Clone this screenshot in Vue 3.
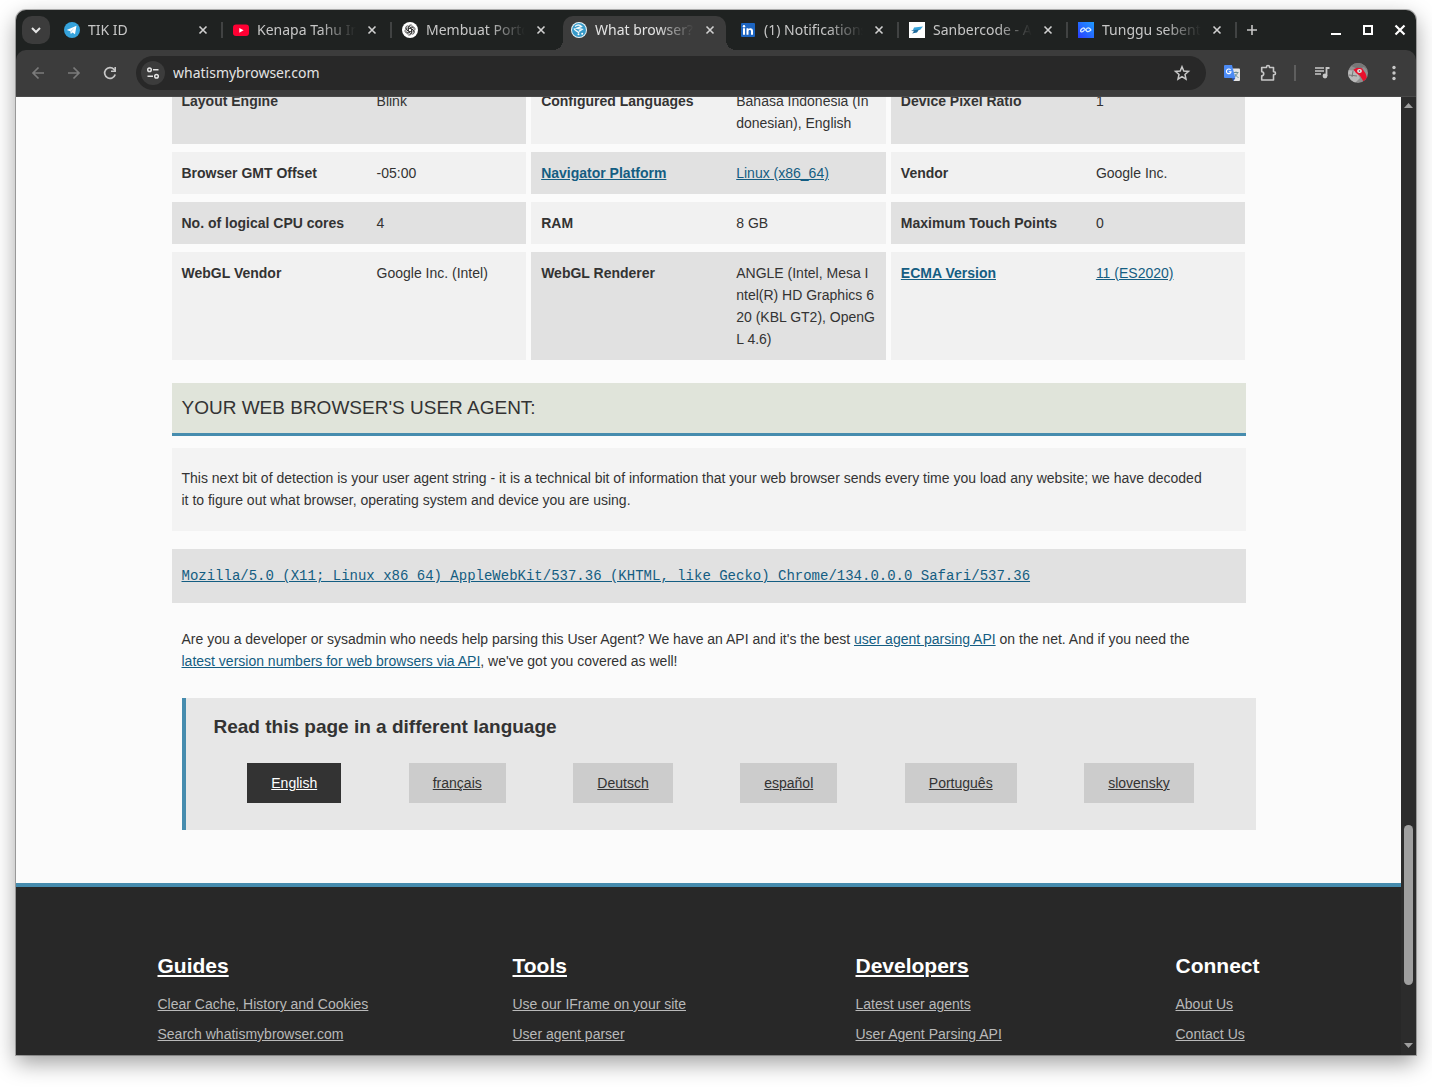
<script setup>
import { ref } from 'vue'

const address = ref('whatismybrowser.com')

const tabs = [
  { icon: 'telegram', title: 'TIK ID', divider: true },
  { icon: 'youtube', title: 'Kenapa Tahu In', divider: true },
  { icon: 'openai', title: 'Membuat Porto' },
  { icon: 'browser', title: 'What browser?', active: true },
  { icon: 'linkedin', title: '(1) Notifications', divider: true },
  { icon: 'sanber', title: 'Sanbercode - A', divider: true },
  { icon: 'wave', title: 'Tunggu sebent', divider: true },
]

const facts = [
  { label: 'Layout Engine', value: 'Blink' },
  { label: 'Configured Languages', value: 'Bahasa Indonesia (Indonesian), English' },
  { label: 'Device Pixel Ratio', value: '1' },
  { label: 'Browser GMT Offset', value: '-05:00' },
  { label: 'Navigator Platform', value: 'Linux (x86_64)', link: true },
  { label: 'Vendor', value: 'Google Inc.' },
  { label: 'No. of logical CPU cores', value: '4' },
  { label: 'RAM', value: '8 GB' },
  { label: 'Maximum Touch Points', value: '0' },
  { label: 'WebGL Vendor', value: 'Google Inc. (Intel)' },
  { label: 'WebGL Renderer', value: 'ANGLE (Intel, Mesa Intel(R) HD Graphics 620 (KBL GT2), OpenGL 4.6)' },
  { label: 'ECMA Version', value: '11 (ES2020)', link: true },
]

const languages = ['English', 'français', 'Deutsch', 'español', 'Português', 'slovensky']

const footer = [
  { title: 'Guides', link: true, items: ['Clear Cache, History and Cookies', 'Search whatismybrowser.com'] },
  { title: 'Tools', link: true, items: ['Use our IFrame on your site', 'User agent parser'] },
  { title: 'Developers', link: true, items: ['Latest user agents', 'User Agent Parsing API'] },
  { title: 'Connect', items: ['About Us', 'Contact Us'] },
]
</script>

<template>
  <div class="desktop">
  <div class="window">
    <header class="chrome">
      <div class="tabstrip">
        <button class="tab-search" aria-label="Search tabs">
          <svg width="10" height="10" viewBox="0 0 10 10"><path d="M1 3 5 7l4-4" fill="none" stroke="#e6e6e6" stroke-width="2" /></svg>
        </button>
        <div class="tabs">
          <div v-for="tab in tabs" :key="tab.title" class="tab" :class="{ active: tab.active, divider: tab.divider }">
            <svg v-if="tab.icon === 'telegram'" class="favicon" viewBox="0 0 16 16">
              <circle cx="8" cy="8" r="8" fill="#35a3dc" />
              <path d="M2.700 8 12.500 3.800 11 12.300 8.400 10.600 6.900 12 6.300 9.300Z" fill="#fff" />
              <path d="m6.300 9.300 4.200-3.600-3.300 4.200-.3 2Z" fill="#b5d9ee" />
            </svg>
            <svg v-else-if="tab.icon === 'youtube'" class="favicon" viewBox="0 0 16 16">
              <rect y="2.500" width="16" height="11.500" rx="3" fill="#f03" />
              <path d="m6.300 5.900 4.300 2.400-4.300 2.400Z" fill="#fff" />
            </svg>
            <svg v-else-if="tab.icon === 'openai'" class="favicon" viewBox="0 0 16 16">
              <circle cx="8" cy="8" r="8" fill="#fff" />
              <g fill="none" stroke="#222" stroke-width=".7">
                <path v-for="n in 6" :key="n" :transform="`rotate(${n * 60} 8 8)`" d="M6.300 9V5.200a2.300 2.300 0 0 1 4.300-1.100M6.300 7l3.300-1.900 2.300 1.300" />
              </g>
            </svg>
            <svg v-else-if="tab.icon === 'browser'" class="favicon" viewBox="0 0 16 16">
              <circle cx="8" cy="8" r="8" fill="#e9f5fa" />
              <circle cx="8" cy="8" r="7" fill="#3699c8" />
              <path d="M4 4.500c2.500-2 5-1.500 6.500 0L6 6.300l5 1-3 2M3 6.500c1 2.500 3.500 2.500 5 4.500" fill="none" stroke="#eef8fc" stroke-width="1.400" />
              <circle cx="11.200" cy="11.700" r="1" fill="#fff" /><circle cx="7.500" cy="12.300" r="1" fill="#fff" />
            </svg>
            <svg v-else-if="tab.icon === 'linkedin'" class="favicon" viewBox="0 0 16 16">
              <rect x="1" y="1" width="14" height="14" rx="1" fill="#1d65c1" />
              <path d="M3 6.300h2v6.500H3ZM6.500 6.300h2v1c.8-1.600 4.500-1.700 4.500 1.500v4h-2V9.300c0-1.800-2.500-1.700-2.500 0v3.500h-2Z" fill="#fff" />
              <circle cx="4" cy="4.200" r="1.200" fill="#fff" />
            </svg>
            <svg v-else-if="tab.icon === 'sanber'" class="favicon" viewBox="0 0 16 16">
              <path d="M0 0h16v16H0Z" fill="#fff" />
              <path d="M5 5.500 14 4.500l-3 3.500H4Z" fill="#39a5dc" />
              <path d="m2 8.500 8-1L8 10.500l-5 1 2-2Z" fill="#1e6c9e" />
            </svg>
            <svg v-else class="favicon" viewBox="0 0 16 16">
              <defs><linearGradient id="wave-fill" x1="0" y1="1" x2="1" y2="0"><stop stop-color="#2a3cff" /><stop offset="1" stop-color="#1e9bff" /></linearGradient></defs>
              <path d="M0 0h16v16H0Z" fill="url(#wave-fill)" />
              <path d="M3 9.800C1.500 8.500 4.500 5.500 6 6l3 3.500c1.500.8 2.500-.5 4.200-1.800M3 9.800c1.500.7 2.500-.6 3.500-1.800M8 7.500c1-1.500 2-2 3-1.500l2.200 1.700" fill="none" stroke="#d9ecff" stroke-width="1.300" />
            </svg>
            <span class="tab-title">{{ tab.title }}</span>
            <button class="tab-close" :aria-label="`Close ${tab.title}`">
              <svg width="10" height="10" viewBox="0 0 10 10"><path d="m1.500 1.500 7 7m0-7-7 7" stroke="currentColor" stroke-width="1.600" /></svg>
            </button>
          </div>
        </div>
        <button class="new-tab" aria-label="New tab">
          <svg width="12" height="12" viewBox="0 0 12 12"><path d="M6 1v10M1 6h10" stroke="#c7c7c7" stroke-width="1.600" /></svg>
        </button>
        <div class="window-controls">
          <button aria-label="Minimize"><svg width="12" height="12" viewBox="0 0 12 12"><path d="M1 10h10" stroke="#fff" stroke-width="2" /></svg></button>
          <button aria-label="Maximize"><svg width="12" height="12" viewBox="0 0 12 12"><path d="M2 2h8v8H2Z" fill="none" stroke="#fff" stroke-width="2" /></svg></button>
          <button aria-label="Close window"><svg width="12" height="12" viewBox="0 0 12 12"><path d="m1.500 1.500 9 9m0-9-9 9" stroke="#fff" stroke-width="2.200" /></svg></button>
        </div>
      </div>

      <div class="toolbar">
        <button class="tool" aria-label="Back"><svg width="16" height="16" viewBox="0 0 16 16"><path d="M14 8H3m5.500-5.500L3 8l5.500 5.500" fill="none" stroke="#7b7b7b" stroke-width="1.700" /></svg></button>
        <button class="tool" aria-label="Forward"><svg width="16" height="16" viewBox="0 0 16 16"><path d="M2 8h11M7.500 2.500 13 8l-5.500 5.500" fill="none" stroke="#7b7b7b" stroke-width="1.700" /></svg></button>
        <button class="tool" aria-label="Reload"><svg width="16" height="16" viewBox="0 0 16 16"><path d="M13.200 9.500A5.400 5.400 0 1 1 12 4.300L13.300 6" fill="none" stroke="#c7c7c7" stroke-width="1.700" /><path d="M14 2v5H9V5.400h3.400V2Z" fill="#c7c7c7" /></svg></button>
        <div class="omnibox">
          <button class="site-info" aria-label="View site information">
            <svg width="16" height="16" viewBox="0 0 16 16" fill="none" stroke="#e3e3e3" stroke-width="1.500"><circle cx="4.500" cy="4.700" r="1.800" /><path d="M8 4.700h5.500M2.500 11.300H8" /><circle cx="11.500" cy="11.300" r="1.800" /></svg>
          </button>
          <input v-model="address" class="address" type="text" aria-label="Address" />
          <button class="star" aria-label="Bookmark this tab">
            <svg width="18" height="18" viewBox="0 0 18 18"><path d="m9 2.700 1.800 4.300 4.700.4L12 10.500l1 4.600-4-2.500-4 2.500 1-4.600-3.500-3.100L7.200 7Z" fill="none" stroke="#c7c7c7" stroke-width="1.500" /></svg>
          </button>
        </div>
        <button class="tool" aria-label="Translate">
          <svg width="16" height="16" viewBox="0 0 16 16">
            <path d="M6 3.500h9a1 1 0 0 1 1 1V15a1 1 0 0 1-1 1H9.500Z" fill="#e4e4e4" />
            <path d="M9.500 7.500h5M12 6.500v1M13.500 7.500c-.5 2.500-2 4-3.500 4.500M11 9c.5 1.500 2 3 3.500 3.500" fill="none" stroke="#5d8790" stroke-width=".9" />
            <path d="M1 0h7l3.300 13H1a1 1 0 0 1-1-1V1a1 1 0 0 1 1-1Z" fill="#4c8bf5" /><path d="M7.500 13h3.800L9.500 16Z" fill="#2856b5" />
            <path d="M6.600 5A2.300 2.300 0 1 0 7 6.800H4.800" fill="none" stroke="#fff" stroke-width="1.100" />
          </svg>
        </button>
        <button class="tool" aria-label="Extensions">
          <svg width="18" height="18" viewBox="0 0 18 18"><path d="M2.700 3.500h4.800V3a1.500 1.500 0 0 1 3 0v.5h4v4.300h.5a1.500 1.500 0 0 1 0 3h-.5V16H2.700v-4.300a2 2 0 0 0 0-4Z" fill="none" stroke="#c7c7c7" stroke-width="1.600" stroke-linejoin="round" /></svg>
        </button>
        <span class="tool-divider"></span>
        <button class="tool" aria-label="Media controls">
          <svg width="18" height="16" viewBox="0 0 18 16"><path d="M2 3h9M2 6h9M2 9h6" stroke="#c7c7c7" stroke-width="1.600" /><path d="M16.500 3h-3v8" fill="none" stroke="#c7c7c7" stroke-width="1.800" /><circle cx="12" cy="11" r="2.400" fill="#c7c7c7" /></svg>
        </button>
        <button class="tool" aria-label="Profile">
          <svg width="20" height="20" viewBox="0 0 20 20">
            <defs><clipPath id="avatar-clip"><circle cx="10" cy="10" r="10" /></clipPath></defs>
            <g clip-path="url(#avatar-clip)">
              <path d="M0 0h20v20H0Z" fill="#8f8f8f" />
              <path d="M0 7 8 8l4 7-5 5H0Z" fill="#b9b9b9" /><path d="m3 3 7 3 6-2 4 4V3l-6-3H5Z" fill="#777" />
              <path d="m1 12 8 1M5 8l-1 6" stroke="#777" fill="none" />
              <path d="M5.500 6.500 9 4.800l5 .4 3.500 5 2 6-3.500 3-4-6.500L8 10Z" fill="#e8102c" />
              <ellipse cx="11.500" cy="8" rx="2.400" ry="2" fill="#e6e6e6" /><circle cx="11.500" cy="8" r=".8" fill="#444" />
            </g>
          </svg>
        </button>
        <button class="tool" aria-label="Menu"><svg width="16" height="16" viewBox="0 0 16 16" fill="#c7c7c7"><circle cx="8" cy="2.500" r="1.700" /><circle cx="8" cy="8" r="1.700" /><circle cx="8" cy="13.500" r="1.700" /></svg></button>
      </div>
    </header>

    <div class="viewport">
      <div class="page">
        <main class="content">
          <dl class="facts">
            <div v-for="fact in facts" :key="fact.label" class="fact">
              <dt><a v-if="fact.link" href="#">{{ fact.label }}</a><template v-else>{{ fact.label }}</template></dt>
              <dd><a v-if="fact.link" href="#">{{ fact.value }}</a><template v-else>{{ fact.value }}</template></dd>
            </div>
          </dl>

          <h2 class="section-title">Your Web Browser's User Agent:</h2>
          <p class="intro">This next bit of detection is your user agent string - it is a technical bit of information that your web browser sends every time you load any website; we have decoded<br />it to figure out what browser, operating system and device you are using.</p>
          <p class="agent"><a href="#">Mozilla/5.0 (X11; Linux x86_64) AppleWebKit/537.36 (KHTML, like Gecko) Chrome/134.0.0.0 Safari/537.36</a></p>
          <p class="developer">Are you a developer or sysadmin who needs help parsing this User Agent? We have an API and it's the best <a href="#">user agent parsing API</a> on the net. And if you need the<br /><a href="#">latest version numbers for web browsers via API</a>, we've got you covered as well!</p>

          <section class="languages">
            <h3>Read this page in a different language</h3>
            <nav class="language-list" aria-label="Languages">
              <a v-for="(language, i) in languages" :key="language" href="#" :class="{ current: i === 0 }">{{ language }}</a>
            </nav>
          </section>
        </main>

        <footer class="footer">
          <div class="footer-columns">
            <section v-for="column in footer" :key="column.title">
              <h4><a v-if="column.link" href="#">{{ column.title }}</a><template v-else>{{ column.title }}</template></h4>
              <ul>
                <li v-for="item in column.items" :key="item"><a href="#">{{ item }}</a></li>
              </ul>
            </section>
          </div>
        </footer>
      </div>

      <div class="scrollbar" aria-hidden="true">
        <svg width="9" height="5" viewBox="0 0 9 5"><path d="M0 5h9L4.500 0Z" fill="#9f9f9f" /></svg>
        <div class="track"><div class="thumb"></div></div>
        <svg width="9" height="5" viewBox="0 0 9 5"><path d="M0 0h9L4.500 5Z" fill="#9f9f9f" /></svg>
      </div>
    </div>
  </div>
  </div>
</template>

<style>
body {
  background: #fff;
}
</style>

<style scoped>
* {
  box-sizing: border-box;
}

.desktop {
  height: 100vh;
  padding: 10px 16px 32px;
  overflow: hidden;
}

.window {
  display: flex;
  flex-direction: column;
  height: 100%;
  border-radius: 10px 10px 0 0;
  overflow: hidden;
  box-shadow: 0 0 0 1px rgba(0, 0, 0, 0.27), 0 8px 22px rgba(0, 0, 0, 0.38);
  background: #1f2221;
  font-family: "Liberation Sans", Arial, sans-serif;
}

button {
  display: flex;
  align-items: center;
  justify-content: center;
  flex: none;
  padding: 0;
  border: 0;
  background: none;
  cursor: pointer;
}

svg {
  display: block;
  flex: none;
}

.chrome {
  flex: none;
  font-family: "Noto Sans", sans-serif;
}

.tabstrip {
  display: flex;
  align-items: center;
  height: 40px;
  padding: 0 4px 0 6px;
}

.tab-search {
  width: 28px;
  height: 28px;
  border-radius: 10px;
  background: #3c3c3c;
}

.tabs {
  display: flex;
  align-self: stretch;
  flex: 0 1 1177px;
  gap: 6px;
  min-width: 0;
  margin-left: 6px;
}

.tab {
  position: relative;
  display: flex;
  align-items: center;
  flex: 1 1 0;
  min-width: 0;
  margin-top: 6px;
  padding: 0 8px 6px;
  color: #c7c7c7;
}

.tab.active {
  border-radius: 10px 10px 0 0;
  background: #3c3c3c;
  color: #e3e3e3;
}

.tab.active::before,
.tab.active::after {
  content: "";
  position: absolute;
  bottom: 0;
  width: 10px;
  height: 10px;
}

.tab.active::before {
  right: 100%;
  background: radial-gradient(circle at 0 0, transparent 10px, #3c3c3c 10px);
}

.tab.active::after {
  left: 100%;
  background: radial-gradient(circle at 100% 0, transparent 10px, #3c3c3c 10px);
}

.tab.divider::after {
  content: "";
  position: absolute;
  top: 6px;
  right: -4px;
  width: 2px;
  height: 16px;
  background: #414343;
}

.favicon {
  width: 16px;
  height: 16px;
}

.tab-title {
  flex: 1;
  min-width: 0;
  margin-left: 8px;
  overflow: hidden;
  white-space: nowrap;
  font-size: 14px;
  line-height: 20px;
  mask-image: linear-gradient(to right, #000 calc(100% - 36px), transparent);
}

.tab-close {
  width: 16px;
  height: 16px;
  margin-left: 8px;
  color: #d0d0d0;
}

.new-tab {
  width: 28px;
  height: 28px;
  margin-left: 5px;
}

.window-controls {
  display: flex;
  margin-left: auto;
}

.window-controls button {
  width: 32px;
  height: 28px;
}

.window-controls button:last-child {
  width: 24px;
  margin-left: 4px;
}

.toolbar {
  display: flex;
  align-items: center;
  height: 47px;
  padding: 0 4px;
  border-bottom: 1px solid #494949;
  border-radius: 10px 10px 0 0;
  background: #3c3c3c;
}

.tool {
  width: 36px;
  height: 34px;
}

.tool-divider {
  width: 2px;
  height: 16px;
  margin: 0 8px;
  background: #5e5e5e;
}

.omnibox {
  display: flex;
  align-items: center;
  flex: 1;
  height: 34px;
  margin: 0 8px;
  padding: 0 12px 0 5px;
  border-radius: 17px;
  background: #282828;
}

.site-info {
  width: 24px;
  height: 24px;
  border-radius: 12px;
  background: #3c3c3c;
}

.address {
  flex: 1;
  min-width: 0;
  height: 24px;
  margin-left: 8px;
  padding: 0;
  border: 0;
  outline: 0;
  background: none;
  color: #e3e3e3;
  font: 14px/24px "Noto Sans", sans-serif;
}

.star {
  width: 24px;
  height: 24px;
}

.viewport {
  display: flex;
  flex: 1;
  min-height: 0;
}

.page {
  flex: 1;
  min-width: 0;
  overflow: hidden;
  background: #fbfbfb;
  color: #333;
  font-size: 14px;
  line-height: 22px;
}

.content {
  max-width: 1074px;
  margin: -17px auto 0;
  padding-bottom: 53px;
}

a {
  color: #145d82;
}

.facts {
  display: grid;
  grid-template-columns: repeat(3, 1fr);
  gap: 8px 5px;
  margin: 0;
}

.fact {
  display: grid;
  grid-template-columns: 55% 45%;
  background: #f1f1f1;
}

.fact:nth-child(odd) {
  background: #e1e1e1;
}

dt,
dd {
  margin: 0;
  padding: 10px;
}

dt {
  font-weight: bold;
}

dd {
  word-break: break-all;
}

.section-title {
  margin: 23px 0 12px;
  padding: 12px 10px;
  border-bottom: 3px solid #468cae;
  background: #e0e4da;
  font-size: 19px;
  font-weight: normal;
  line-height: 26px;
  text-transform: uppercase;
}

p {
  margin: 0;
}

.intro {
  padding: 19px 10px 20px;
  background: #f3f3f3;
}

.agent {
  margin: 18px 0 25px;
  padding: 16px 10px;
  background: #e1e1e1;
  font-family: "Liberation Mono", monospace;
}

.developer {
  padding: 0 10px;
}

.languages {
  margin: 26px -10px 0 10px;
  padding: 16px 28px 27px;
  border-left: 4px solid #468cae;
  background: #e7e7e7;
}

.languages h3 {
  margin: 0 0 23px;
  font-size: 19px;
  line-height: 26px;
}

.language-list {
  display: flex;
  justify-content: space-around;
}

.language-list a {
  padding: 9px 24px;
  background: #ccc;
  color: #333;
}

.language-list a.current {
  background: #333;
  color: #fff;
}

.footer {
  min-height: 172px;
  padding: 64px 0;
  border-top: 4px solid #468cae;
  background: #282828;
}

.footer-columns {
  display: grid;
  grid-template-columns: 355fr 343fr 320fr 84fr;
  max-width: 1102px;
  margin: 0 auto;
}

.footer h4 {
  margin: 0 0 12px;
  color: #fff;
  font-size: 21px;
  line-height: 30px;
}

.footer h4 a {
  color: #fff;
}

.footer ul {
  display: flex;
  flex-direction: column;
  gap: 8px;
  margin: 0;
  padding: 0;
  list-style: none;
}

.footer li a {
  color: #b9b9b9;
  white-space: nowrap;
}

.scrollbar {
  display: flex;
  flex-direction: column;
  align-items: center;
  width: 15px;
  padding: 6px 0 7px;
  background: #2c2c2c;
}

.track {
  display: flex;
  flex: 1;
  align-items: flex-end;
  padding: 5px 0 58px;
}

.thumb {
  width: 9px;
  height: 160px;
  border-radius: 5px;
  background: #9f9f9f;
}
</style>
